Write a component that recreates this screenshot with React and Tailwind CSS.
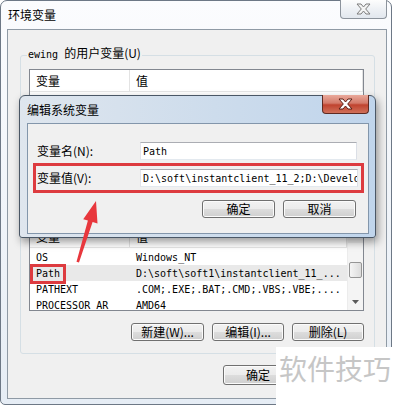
import React from 'react';

const cjk = "font-['Noto_Sans_CJK_SC',sans-serif]";
const mono = "font-['DejaVu_Sans_Mono','Noto_Sans_CJK_SC',monospace]";

const btn =
  "flex items-center justify-center h-[18px] rounded-[3px] border border-[#707070] bg-[linear-gradient(#f2f2f2_0%,#ebebeb_50%,#dddddd_50%,#cfcfcf_100%)] shadow-[inset_0_0_0_1px_#fbfbfb] text-[12px] leading-none text-black";

const CloseX = ({ fill, stroke }) => (
  <svg width="15" height="12" viewBox="0 0 15 12">
    <path
      d="M1 1h4l2.5 3 2.5-3h4l-4.3 5 4.3 5h-4l-2.5-3-2.5 3h-4l4.3-5z"
      fill={fill}
      stroke={stroke}
      strokeWidth="1"
      strokeLinejoin="round"
    />
  </svg>
);

const ListHeader = () => (
  <div className="flex h-[22px] shrink-0 border-b border-[#e5e5e5] bg-white text-[12px] leading-none">
    <div className="w-[100px] pl-[6px] flex items-center border-r border-[#e3e3e3]">变量</div>
    <div className="flex-1 pl-[6px] flex items-center border-r border-[#e3e3e3]">值</div>
  </div>
);

const userRows = [
  ['TEMP', '%USERPROFILE%\\AppData\\Local\\Temp'],
  ['TMP', '%USERPROFILE%\\AppData\\Local\\Temp'],
];

const sysRows = [
  ['OS', 'Windows_NT'],
  ['Path', 'D:\\soft\\soft1\\instantclient_11_...'],
  ['PATHEXT', '.COM;.EXE;.BAT;.CMD;.VBS;.VBE;....'],
  ['PROCESSOR_AR', 'AMD64'],
];

const Row = ({ name, value, selected, marked }) => (
  <div className={`flex h-[16px] items-center whitespace-nowrap ${mono} text-[10px] ${selected ? 'bg-[#e9e9e9]' : ''}`}>
    <div className="w-[100px] pl-[6px]">
      {marked ? (
        <span className="inline-block -ml-[3px] px-[3px] h-[14px] leading-[14px] outline-3 outline-solid outline-[#dd3b3f]">
          {name}
        </span>
      ) : (
        name
      )}
    </div>
    <div className="flex-1 pl-[6px] overflow-hidden">{value}</div>
  </div>
);

const Scrollbar = () => (
  <div className="w-[16px] flex flex-col bg-[#f4f4f4] border-l border-[#ececec]">
    <div className="h-[17px] bg-[#e8e8e8]" />
    <div className="flex-1 pt-[19px] px-[1px]">
      <div className="h-[16px] rounded-[2px] border border-[#959595] bg-[linear-gradient(90deg,#f5f5f5,#dcdcdc)]" />
    </div>
    <div className="h-[17px] flex items-center justify-center">
      <svg width="7" height="4" viewBox="0 0 7 4">
        <path d="M0 0h7L3.5 4z" fill="#5a5a5a" />
      </svg>
    </div>
  </div>
);

const GroupBox = ({ label, children, className }) => (
  <div className={`relative ml-[12px] w-[355px] rounded-[3px] border border-[#d5dfe5] pl-[8px] pt-[13px] pb-[12px] ${className}`}>
    <div className="absolute -top-[10px] left-[6px] px-[1px] bg-[#f0f0f0] h-[14px] leading-[14px] text-[12px] whitespace-nowrap">
      {label}
    </div>
    {children}
  </div>
);

const VarButtons = () => (
  <div className="flex justify-end gap-[8px] w-[335px]">
    <div className={`${btn} w-[73px]`}>新建(W)...</div>
    <div className={`${btn} w-[72px]`}>编辑(I)...</div>
    <div className={`${btn} w-[72px]`}>删除(L)</div>
  </div>
);

const EditDialog = () => (
  <div className="absolute left-[19px] top-[95px] w-[357px] h-[143px] flex flex-col rounded-t-[6px] rounded-b-[3px] border border-[#4a5766] bg-[linear-gradient(90deg,#dfe6ee,#cddcec_55%,#c0d5ec)] pl-[7px] pr-[6px] pb-[3px] shadow-[2px_4px_8px_rgba(0,0,0,0.4)]">
    <div className="h-[27px] flex justify-between items-center">
      <div className="text-[12px] leading-none text-black">编辑系统变量</div>
      <div className="self-start -mt-[1px] w-[47px] h-[19px] rounded-b-[4px] border border-t-0 border-[#5e2a22] bg-[linear-gradient(#e9a99b,#d47a6a_45%,#c0432f_55%,#d0705a)] flex items-center justify-center">
        <CloseX fill="#ffffff" stroke="#5b1e14" />
      </div>
    </div>
    <div className="flex-1 border border-[#8396ab] bg-[#f0f0f0] flex flex-col pt-[18px]">
      <div className="flex items-center h-[18px] pl-[9px]">
        <div className="w-[103px] text-[12px] leading-none">变量名(N):</div>
        <div className={`h-[18px] w-[217px] border border-[#abadb3] border-l-[#e2e3ea] border-r-[#dbdfe6] border-b-[#e3e9ef] bg-white flex items-center pl-[2px] overflow-hidden whitespace-nowrap ${mono} text-[10px]`}>
          Path
        </div>
      </div>
      <div className="mt-[6px] ml-[8px] w-[325px] py-[3px] pl-[1px] flex items-center outline-3 outline-solid outline-[#dd3b3f]">
        <div className="w-[103px] text-[12px] leading-none">变量值(V):</div>
        <div className={`h-[18px] w-[218px] border border-[#abadb3] border-l-[#e2e3ea] border-r-[#dbdfe6] border-b-[#e3e9ef] bg-white flex items-center pl-[2px] overflow-hidden whitespace-nowrap ${mono} text-[10px]`}>
          {'D:\\soft\\instantclient_11_2;D:\\Develop\\bin'}
        </div>
      </div>
      <div className="mt-[10px] flex justify-end gap-[8px] pr-[12px]">
        <div className={`${btn} w-[73px] border-[#3c7fb1] shadow-[inset_0_0_0_1px_#cbeffd]`}>确定</div>
        <div className={`${btn} w-[73px]`}>取消</div>
      </div>
    </div>
  </div>
);

const Arrow = () => (
  <svg className="absolute left-0 top-0 pointer-events-none" width="394" height="406" viewBox="0 0 394 406">
    <polygon
      points="96,201 97.5,223.5 92.6,222 79,262.5 76.5,261.8 87.9,220.6 83.2,219.2"
      fill="#e8373d"
    />
  </svg>
);

const App = () => {
  return (
    <div className={`relative w-[394px] h-[406px] overflow-hidden bg-white text-black ${cjk}`}>
      <div className="w-[392px] h-[405px] flex flex-col rounded-t-[7px] rounded-b-[5px] border border-[#6d7886] bg-[linear-gradient(#fbfcfe,#e6edf5)] pl-[6px] pr-[4px] pb-[5px]">
        <div className="h-[28px] flex justify-between items-center pl-[1px]">
          <div className="text-[12px] leading-none">环境变量</div>
          <div className="self-start -mt-[1px] w-[47px] h-[19px] rounded-b-[4px] border border-t-0 border-[#8c939c] bg-[linear-gradient(#fdfdfd,#eef1f5_50%,#e2e7ee)] flex items-center justify-center">
            <CloseX fill="#f4f4f4" stroke="#7d7d7d" />
          </div>
        </div>
        <div className="h-[370px] border border-[#8f9aa5] bg-[#f0f0f0] flex flex-col">
          <GroupBox
            className="mt-[25px]"
            label={
              <>
                <span className={`${mono} text-[10px]`}>ewing </span>的用户变量(U)
              </>
            }
          >
            <div className="w-[335px] h-[92px] border border-[#828790] bg-white flex flex-col overflow-hidden">
              <ListHeader />
              <div className="pt-[1px]">
                {userRows.map(([n, v]) => (
                  <Row key={n} name={n} value={v} />
                ))}
              </div>
            </div>
            <div className="mt-[9px]">
              <VarButtons />
            </div>
          </GroupBox>

          <GroupBox className="mt-[10px]" label="系统变量(S)">
            <div className="w-[335px] h-[86px] border border-[#828790] bg-white flex overflow-hidden">
              <div className="flex-1 flex flex-col">
                <ListHeader />
                <div className="pt-[1px]">
                  {sysRows.map(([n, v]) => (
                    <Row key={n} name={n} value={v} selected={n === 'Path'} marked={n === 'Path'} />
                  ))}
                </div>
              </div>
              <Scrollbar />
            </div>
            <div className="mt-[12px]">
              <VarButtons />
            </div>
          </GroupBox>

          <div className="mt-[11px] flex justify-end gap-[9px] pr-[14px]">
            <div className={`${btn} h-[20px] w-[70px]`}>确定</div>
            <div className={`${btn} h-[20px] w-[70px]`}>取消</div>
          </div>
        </div>
      </div>

      <EditDialog />
      <Arrow />

      <div className="absolute left-[276px] top-[347px] w-[118px] h-[59px] bg-white pl-[3px] pt-[7px]">
        <div className="text-[28px] leading-[28px] text-[#c6c6c6] whitespace-nowrap">软件技巧</div>
      </div>
    </div>
  );
};

export default App;
